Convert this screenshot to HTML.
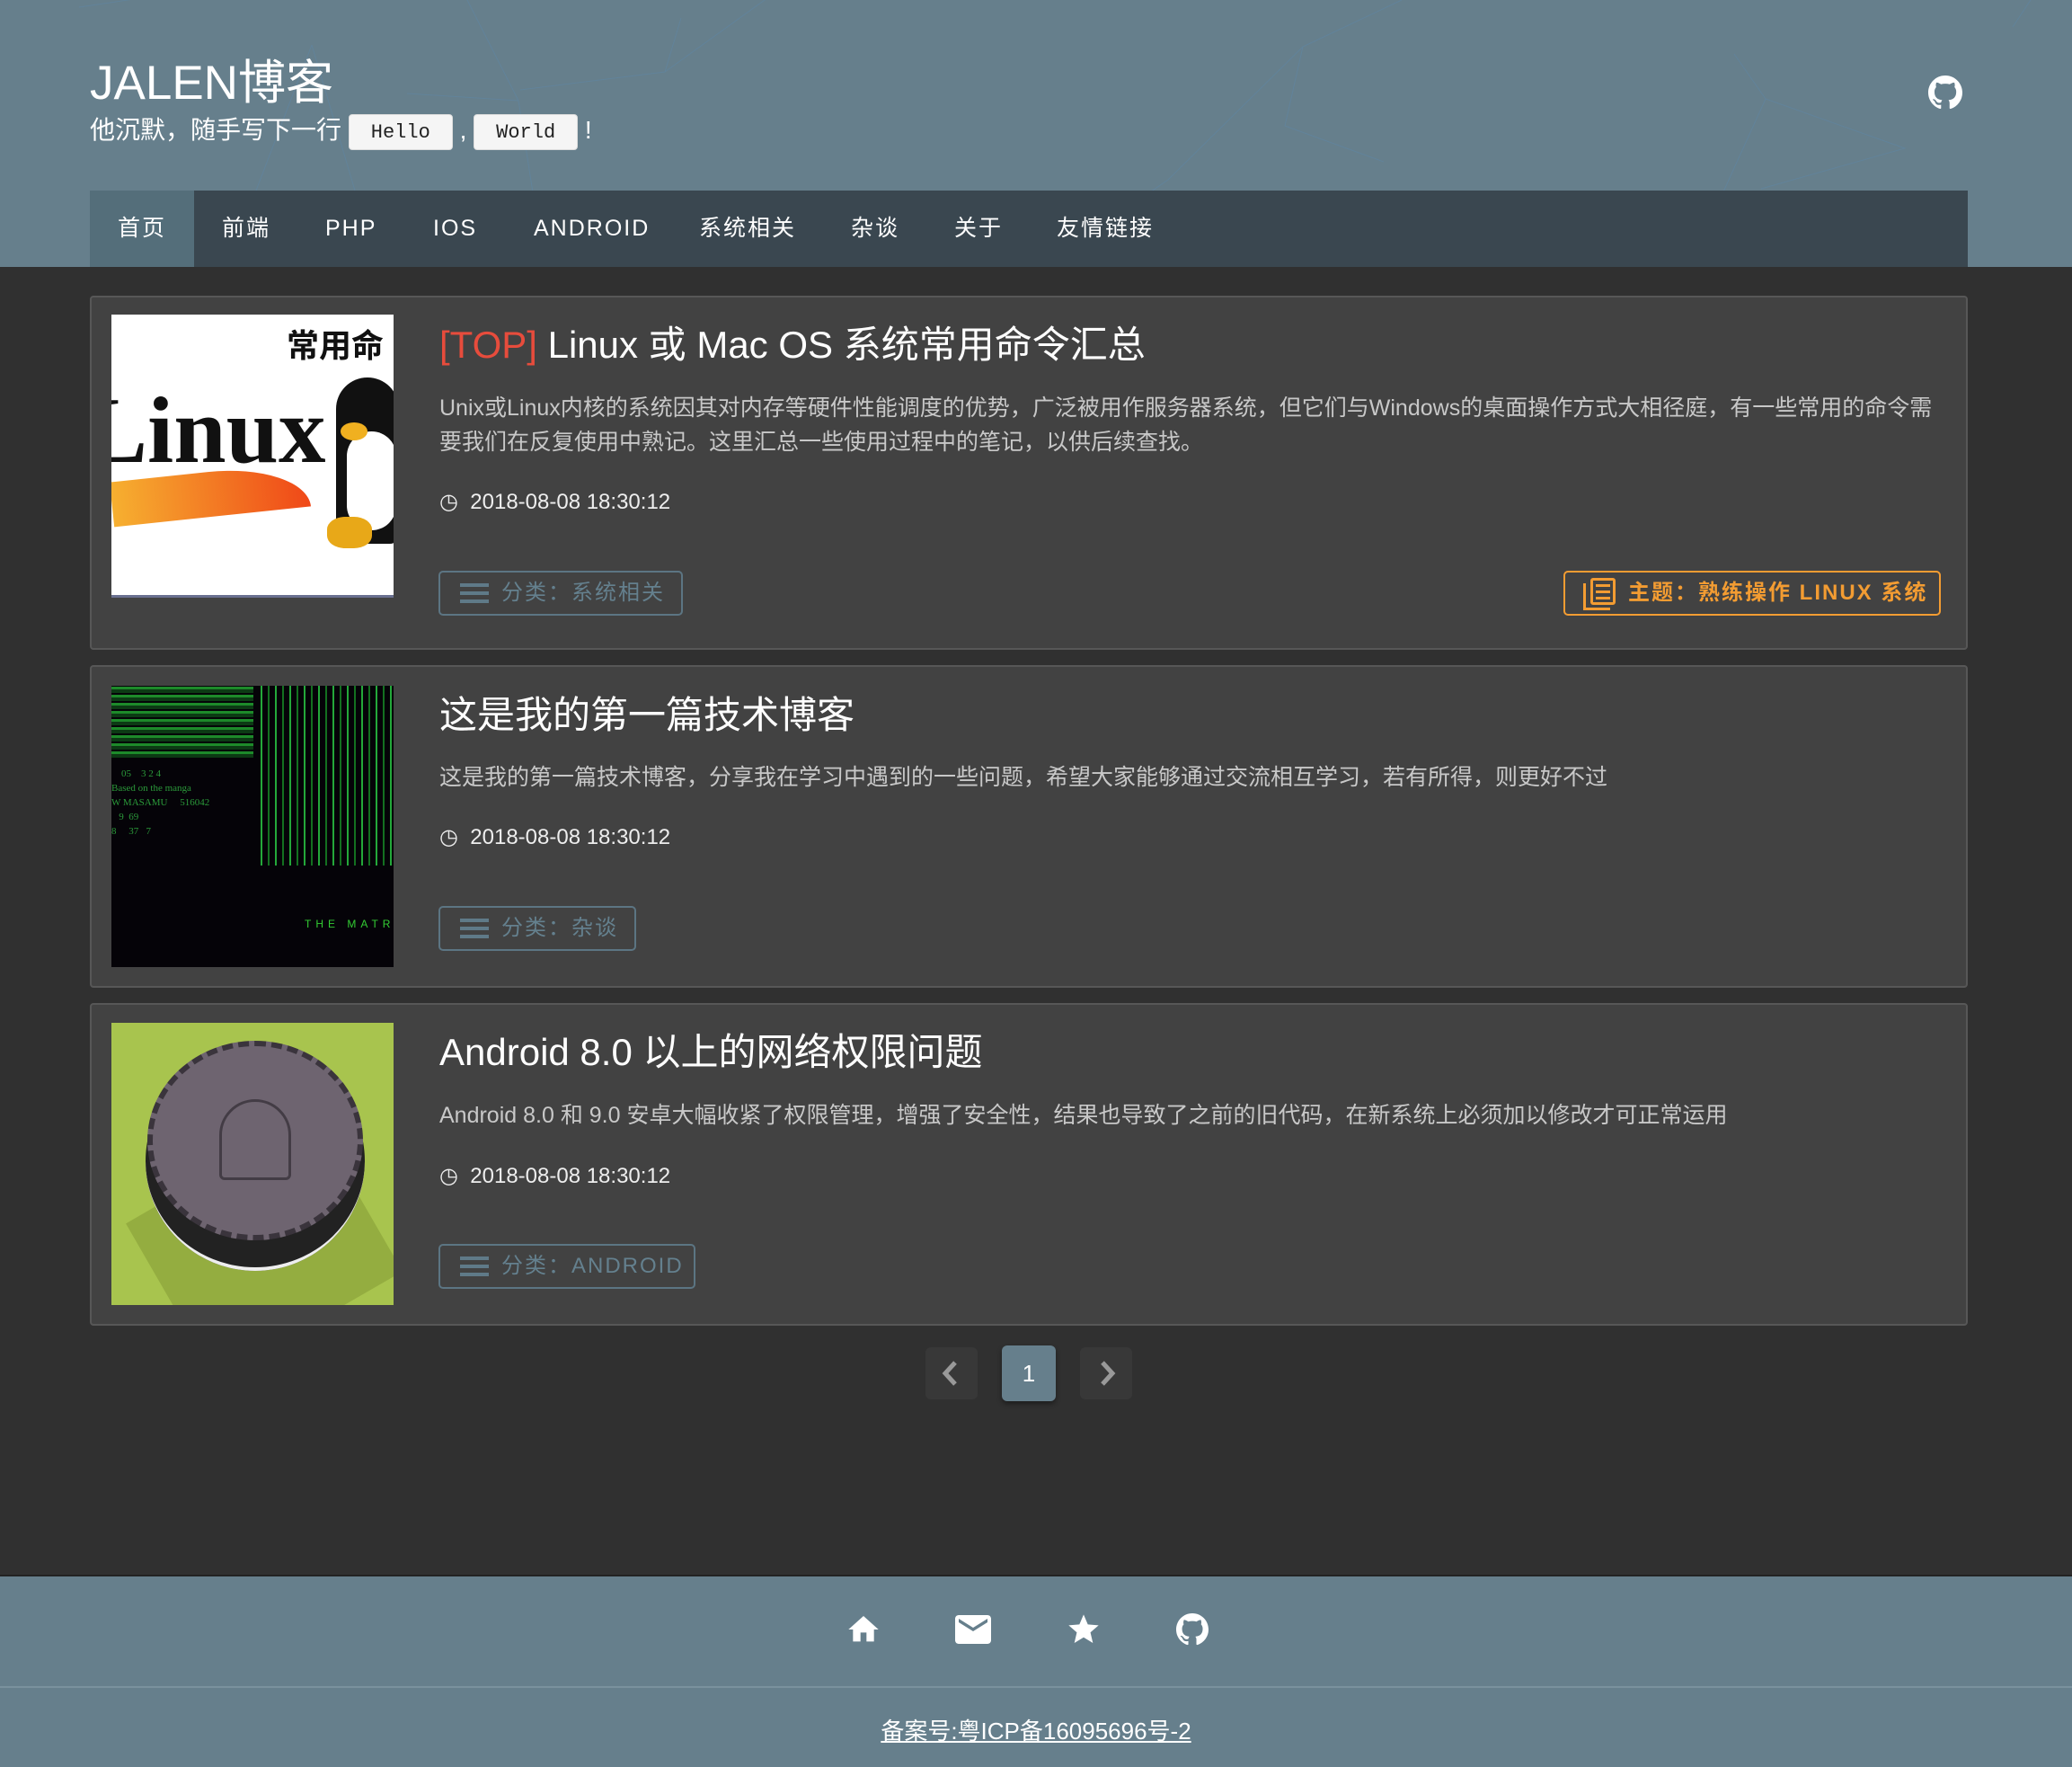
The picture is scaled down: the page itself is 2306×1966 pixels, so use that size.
<!DOCTYPE html>
<html><head><meta charset="utf-8"><style>
*{margin:0;padding:0;box-sizing:border-box}
body{width:2306px;height:1966px;background:#303030;position:relative;overflow:hidden;font-family:"Liberation Sans","Noto Sans CJK SC",sans-serif;color:#fff}
.a{position:absolute}
#hdr{left:0;top:0;width:2306px;height:297px;background:#667f8c}
#nav{left:100px;top:212px;width:2090px;height:85px;background:#3a4750}
.ni{position:absolute;top:0;height:85px;line-height:85px;font-size:25px;letter-spacing:2px;color:#fff}
.code{display:inline-block;background:#f5f5f5;color:#222;font-family:"Liberation Mono",monospace;font-size:22px;border-radius:4px;padding:0 24px;height:40px;line-height:40px;border:1px solid #ddd;vertical-align:middle}
.card{background:#424242;border:2px solid #575757;border-radius:4px;left:100px;width:2090px}
.img{left:124px;width:314px;overflow:hidden}
.t{left:489px;font-size:42px;color:#fff;white-space:nowrap}
.d{left:489px;font-size:25px;color:#c8c8c8;line-height:38px;width:1670px}
.dt{left:489px;font-size:24px;color:#eee}
.tag{left:488px;height:50px;border:2px solid #5c7583;border-radius:5px;color:#64808e;font-size:24px;line-height:46px;padding-left:68px;letter-spacing:2px}
.tag:before{content:"";position:absolute;left:22px;top:12px;width:32px;height:4px;background:#5f7a88;box-shadow:0 9px 0 #5f7a88,0 18px 0 #5f7a88}
.pg{top:1499px;width:58px;height:58px;border-radius:6px;background:#383838}
</style></head><body>
<div id="hdr" class="a">
<svg class="a" style="left:0;top:0" width="2306" height="297"><g stroke="#5f86a3" stroke-width="1" fill="none" opacity=".6"><path d="M88 8 L210 -10 M347 50 L395 212 M347 50 L285 212 M577 112 L520 0 M577 112 L453 104 M577 112 L606 297 M579 100 L740 80 L758 20 M740 80 L858 -5 M1450 52 L1560 0 M1450 52 L1300 200 L1160 297 M1450 52 L1430 140 L1540 180 M1930 60 L1965 110 L2120 165 L1960 210 M1965 110 L1880 297 M2240 30 L2260 0"/></g></svg>
<div class="a" style="left:100px;top:50px;font-size:53px;color:#fff">JALEN博客</div>
<div class="a" style="left:100px;top:123px;font-size:28px;color:#fff;white-space:nowrap">他沉默，随手写下一行 <span class="code">Hello</span> , <span class="code">World</span> !</div>
<svg class="a" style="left:2146px;top:84px" width="38" height="38" viewBox="0 0 16 16"><path fill="#fff" d="M8 0C3.58 0 0 3.58 0 8c0 3.54 2.29 6.53 5.47 7.59.4.07.55-.17.55-.38 0-.19-.01-.82-.01-1.49-2.01.37-2.53-.49-2.69-.94-.09-.23-.48-.94-.82-1.13-.28-.15-.68-.52-.01-.53.63-.01 1.08.58 1.23.82.72 1.21 1.87.87 2.33.66.07-.52.28-.87.51-1.07-1.78-.2-3.64-.89-3.64-3.95 0-.87.31-1.59.82-2.150-.08-.2-.36-1.02.08-2.12 0 0 .67-.21 2.2.82.64-.18 1.32-.27 2-.27.68 0 1.36.09 2 .27 1.53-1.04 2.2-.82 2.2-.82.44 1.1.16 1.92.08 2.12.51.56.82 1.27.82 2.15 0 3.07-1.87 3.75-3.65 3.95.29.25.54.73.54 1.48 0 1.07-.01 1.93-.01 2.2 0 .21.15.46.55.38A8.013 8.013 0 0016 8c0-4.42-3.58-8-8-8z"/></svg>
</div>
<div id="nav" class="a">
<div class="ni" style="left:0;width:116px;background:#546e7a;text-align:center">首页</div>
<div class="ni" style="left:147px">前端</div>
<div class="ni" style="left:262px">PHP</div>
<div class="ni" style="left:382px">IOS</div>
<div class="ni" style="left:494px">ANDROID</div>
<div class="ni" style="left:678px">系统相关</div>
<div class="ni" style="left:847px">杂谈</div>
<div class="ni" style="left:962px">关于</div>
<div class="ni" style="left:1076px">友情链接</div>
</div>

<div class="a card" style="top:329px;height:394px"></div>
<div class="a img" style="top:350px;height:315px;background:#fff;border-bottom:3px solid #6a7090">
<div class="a" style="left:195px;top:6px;font-size:36px;font-weight:bold;color:#111">常用命</div>
<div class="a" style="left:-30px;top:68px;font-family:'Liberation Serif',serif;font-weight:bold;font-size:105px;color:#111">Linux</div>
<div class="a" style="left:0;top:175px;width:220px;height:50px;background:linear-gradient(90deg,#f6b030,#f04818);border-radius:0 50% 50% 0/0 100% 0 0;transform:rotate(-6deg)"></div>
<div class="a" style="left:250px;top:70px;width:70px;height:185px;background:#111;border-radius:35px 35px 10px 10px"></div>
<div class="a" style="left:262px;top:130px;width:55px;height:110px;background:#fff;border-radius:28px"></div>
<div class="a" style="left:255px;top:120px;width:30px;height:20px;background:#f0b020;border-radius:50%"></div>
<div class="a" style="left:240px;top:225px;width:50px;height:35px;background:#e8a818;border-radius:40%"></div>
</div>
<div class="a t" style="top:350px"><span style="color:#e74c3c">[TOP]</span> Linux 或 Mac OS 系统常用命令汇总</div>
<div class="a d" style="top:435px">Unix或Linux内核的系统因其对内存等硬件性能调度的优势，广泛被用作服务器系统，但它们与Windows的桌面操作方式大相径庭，有一些常用的命令需要我们在反复使用中熟记。这里汇总一些使用过程中的笔记，以供后续查找。</div>
<div class="a dt" style="top:544px">◷&nbsp; 2018-08-08 18:30:12</div>
<div class="a tag" style="top:635px;width:272px">分类：系统相关</div>
<div class="a" style="left:1740px;top:635px;width:420px;height:50px;border:2px solid #f39c32;border-radius:5px;color:#f39c32;font-size:24px;line-height:46px;padding-left:70px;letter-spacing:2px;font-weight:bold">主题：熟练操作 LINUX 系统
<div class="a" style="left:28px;top:6px;width:28px;height:30px;border:3px solid #f39c32;border-radius:3px"></div><div class="a" style="left:20px;top:12px;width:30px;height:30px;border-left:3px solid #f39c32;border-bottom:3px solid #f39c32"></div>
<div class="a" style="left:34px;top:13px;width:16px;height:3px;background:#f39c32;box-shadow:0 7px 0 #f39c32,0 14px 0 #f39c32"></div></div>

<div class="a card" style="top:740px;height:359px"></div>
<div class="a img" style="top:763px;height:313px;background:#050308">
<div class="a" style="left:0;top:0;width:158px;height:80px;background:repeating-linear-gradient(0deg,#0c3a14 0 4px,#1d8a2a 4px 7px,#050308 7px 9px)"></div>
<div class="a" style="left:160px;top:0;width:154px;height:200px;background:repeating-linear-gradient(90deg,#050308 0 6px,#24a83a 6px 8px,#050308 8px 14px,#137020 14px 16px)"></div>
<div class="a" style="left:0;top:90px;font-family:'Liberation Serif',serif;font-size:11px;color:#2b9a3a;line-height:16px">&nbsp;&nbsp;&nbsp;&nbsp;05 &nbsp;&nbsp; 3 2 4<br>Based on the manga<br>W MASAMU &nbsp;&nbsp;&nbsp; 516042<br>&nbsp;&nbsp;&nbsp;9 &nbsp;69<br>8 &nbsp;&nbsp;&nbsp; 37 &nbsp;&nbsp;7</div>
<div class="a" style="left:215px;top:258px;font-size:12px;color:#3c3;letter-spacing:5px;white-space:nowrap">THE MATR</div>
</div>
<div class="a t" style="top:762px">这是我的第一篇技术博客</div>
<div class="a d" style="top:846px">这是我的第一篇技术博客，分享我在学习中遇到的一些问题，希望大家能够通过交流相互学习，若有所得，则更好不过</div>
<div class="a dt" style="top:917px">◷&nbsp; 2018-08-08 18:30:12</div>
<div class="a tag" style="top:1008px;width:220px">分类：杂谈</div>

<div class="a card" style="top:1116px;height:359px"></div>
<div class="a img" style="top:1138px;height:314px;background:#a8c44e">
<div class="a" style="left:50px;top:150px;width:240px;height:200px;background:#94ad40;transform:rotate(-30deg)"></div>
<div class="a" style="left:38px;top:32px;width:244px;height:244px;border-radius:50%;background:#222"></div>
<div class="a" style="left:38px;top:100px;width:244px;height:176px;border-radius:0 0 122px 122px;border-bottom:4px solid #eee"></div>
<div class="a" style="left:40px;top:20px;width:240px;height:222px;border-radius:50%;background:#6e6470;border:6px dashed #3a343c"></div>
<div class="a" style="left:120px;top:85px;width:80px;height:90px;border:3px solid #433c45;border-radius:40px 40px 6px 6px"></div>
</div>
<div class="a t" style="top:1137px">Android 8.0 以上的网络权限问题</div>
<div class="a d" style="top:1222px">Android 8.0 和 9.0 安卓大幅收紧了权限管理，增强了安全性，结果也导致了之前的旧代码，在新系统上必须加以修改才可正常运用</div>
<div class="a dt" style="top:1294px">◷&nbsp; 2018-08-08 18:30:12</div>
<div class="a tag" style="top:1384px;width:286px">分类：ANDROID</div>

<div class="a pg" style="left:1030px"><svg width="58" height="58"><path d="M33 17 L22 29 L33 41" stroke="#999" stroke-width="5" fill="none"/></svg></div>
<div class="a pg" style="left:1115px;width:60px;height:62px;top:1497px;background:#667f8c;color:#fff;font-size:26px;line-height:62px;text-align:center;box-shadow:0 3px 6px rgba(0,0,0,.4)">1</div>
<div class="a pg" style="left:1202px"><svg width="58" height="58"><path d="M25 17 L36 29 L25 41" stroke="#999" stroke-width="5" fill="none"/></svg></div>

<div class="a" style="left:0;top:1752px;width:2306px;height:214px;background:#667f8c;border-top:2px solid #222"></div>
<div class="a" style="left:0;top:1876px;width:2306px;height:2px;background:#7a919d"></div>
<svg class="a" style="left:940px;top:1793px" width="42" height="40" viewBox="0 0 24 24"><path fill="#fff" d="M10 20v-6h4v6h5v-8h3L12 3 2 12h3v8z"/></svg>
<svg class="a" style="left:1063px;top:1796px" width="40" height="34" viewBox="2 4 20 16"><path fill="#fff" d="M20 4H4c-1.1 0-2 .9-2 2v12c0 1.1.9 2 2 2h16c1.1 0 2-.9 2-2V6c0-1.1-.9-2-2-2zm0 4l-8 5-8-5V6l8 5 8-5v2z"/></svg>
<svg class="a" style="left:1186px;top:1793px" width="40" height="40" viewBox="0 0 24 24"><path fill="#fff" d="M12 17.27L18.18 21l-1.64-7.03L22 9.24l-7.19-.61L12 2 9.19 8.63 2 9.24l5.46 4.73L5.82 21z"/></svg>
<svg class="a" style="left:1309px;top:1795px" width="36" height="36" viewBox="0 0 16 16"><path fill="#fff" d="M8 0C3.58 0 0 3.58 0 8c0 3.54 2.29 6.53 5.47 7.59.4.07.55-.17.55-.38 0-.19-.01-.82-.01-1.49-2.01.37-2.53-.49-2.69-.94-.09-.23-.48-.94-.82-1.13-.28-.15-.68-.52-.01-.53.63-.01 1.08.58 1.23.82.72 1.21 1.87.87 2.33.66.07-.52.28-.87.51-1.07-1.78-.2-3.64-.89-3.64-3.95 0-.87.31-1.59.82-2.15-.08-.2-.36-1.02.08-2.12 0 0 .67-.21 2.2.82.64-.18 1.32-.27 2-.27.68 0 1.36.09 2 .27 1.53-1.04 2.2-.82 2.2-.82.44 1.1.16 1.92.08 2.12.51.56.82 1.27.82 2.15 0 3.07-1.87 3.75-3.65 3.95.29.25.54.73.54 1.48 0 1.07-.01 1.93-.01 2.2 0 .21.15.46.55.38A8.013 8.013 0 0016 8c0-4.42-3.58-8-8-8z"/></svg>
<div class="a" style="left:0;top:1906px;width:2306px;text-align:center;font-size:26px;color:#fff;text-decoration:underline">备案号:粤ICP备16095696号-2</div>
</body></html>
